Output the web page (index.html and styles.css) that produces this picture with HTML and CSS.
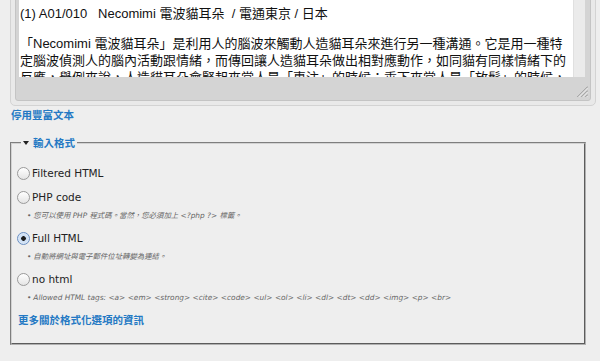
FILE: index.html
```html
<!DOCTYPE html>
<html lang="zh-Hant">
<head>
    <meta charset="UTF-8">
    <meta name="viewport" content="width=device-width, initial-scale=1.0">
    <title>Body</title>
    <link rel="stylesheet" href="styles.css">
</head>
<body>
    <div class="page">

        <!-- Rich text editor -->
        <div class="editor">
            <div class="editor-inner">
                <div class="editor-area">
                    <div class="editor-content">
                        <p>(1) A01/010&nbsp;&nbsp; Necomimi 電波貓耳朵 &nbsp;/ 電通東京 / 日本</p>
                        <p>「Necomimi 電波貓耳朵」是利用人的腦波來觸動人造貓耳朵來進行另一種溝通。它是用一種特定腦波偵測人的腦內活動跟情緒，而傳回讓人造貓耳朵做出相對應動作，如同貓有同樣情緒下的反應，舉例來說，人造貓耳朵會豎起來當人是「專注」的時候；垂下來當人是「放鬆」的時候，而當人是既專注又放鬆的時候，耳朵就會擺動。</p>
                    </div>
                    <div class="editor-scroll"></div>
                </div>
                <div class="editor-bottom">
                    <svg class="grip" width="11" height="11" viewBox="0 0 11 11">
                        <path d="M0.5 11 L11 0.5 M4.5 11 L11 4.5 M8.5 11 L11 8.5" stroke="#7c7c7c" stroke-width="1" fill="none"/>
                        <path d="M1.5 11 L11 1.5 M5.5 11 L11 5.5 M9.5 11 L11 9.5" stroke="#f2f2f2" stroke-width="1" fill="none"/>
                    </svg>
                </div>
            </div>
        </div>

        <a class="toggle-link" href="#">停用豐富文本</a>

        <!-- Input format -->
        <fieldset class="filter-wrapper">
            <legend><span class="arrow"></span>輸入格式</legend>

            <div class="option option--plain">
                <label class="option-label">
                    <input type="radio" name="format" value="filtered_html">
                    Filtered HTML
                </label>
            </div>

            <div class="option">
                <label class="option-label">
                    <input type="radio" name="format" value="php_code">
                    PHP code
                </label>
                <ul class="tips">
                    <li>您可以使用 PHP 程式碼。當然，您必須加上 &lt;?php ?&gt; 標籤。</li>
                </ul>
            </div>

            <div class="option">
                <label class="option-label">
                    <input type="radio" name="format" value="full_html" checked>
                    Full HTML
                </label>
                <ul class="tips">
                    <li>自動將網址與電子郵件位址轉變為連結。</li>
                </ul>
            </div>

            <div class="option">
                <label class="option-label">
                    <input type="radio" name="format" value="no_html">
                    no html
                </label>
                <ul class="tips">
                    <li>Allowed HTML tags: &lt;a&gt; &lt;em&gt; &lt;strong&gt; &lt;cite&gt; &lt;code&gt; &lt;ul&gt; &lt;ol&gt; &lt;li&gt; &lt;dl&gt; &lt;dt&gt; &lt;dd&gt; &lt;img&gt; &lt;p&gt; &lt;br&gt;</li>
                </ul>
            </div>

            <a class="more-link" href="#">更多關於格式化選項的資訊</a>
        </fieldset>

    </div>
</body>
</html>
```

FILE: styles.css
```css
body {
    margin: 0;
    background: #eeeeee;
    font-family: "DejaVu Sans", "Noto Sans CJK TC", sans-serif;
    font-size: 10.5px;
    color: #222;
}
.page {
    padding: 0 4px 0 10px;
}
a {
    color: #2479c4;
    text-decoration: none;
    font-weight: bold;
}

/* Editor box (scrolled so its top is out of view) */
.editor {
    margin-top: -12px;
    border: 1px solid #d3d3d3;
    border-radius: 5px;
    padding: 4px;
    background: #e9e9e9;
}
.editor-inner {
    border: 1px solid #c4c4c4;
    border-radius: 3px;
    background: #d4d4d4;
    padding: 3px 5px 0 3px;
}
.editor-area {
    display: flex;
    height: 80px;
}
.editor-content {
    flex: 1;
    background: #fff;
    overflow: hidden;
    padding: 8px 4px 0 1px;
    font-family: "Liberation Sans", "Noto Sans CJK TC", sans-serif;
    font-size: 13px;
    line-height: 17px;
    color: #111;
}
.editor-content p {
    margin: 0 0 13px;
}
.editor-scroll {
    width: 12px;
    box-sizing: border-box;
    background: #ebebeb;
    border-left: 1px solid #e0e0e0;
}
.editor-bottom {
    height: 23px;
    box-sizing: border-box;
    display: flex;
    justify-content: flex-end;
    align-items: flex-end;
    padding-bottom: 3px;
    margin-right: -3px;
}

.toggle-link {
    display: block;
    margin: 2px 0 0 1px;
    line-height: 14px;
    font-family: "Noto Sans CJK TC", sans-serif;
}

/* Input format fieldset */
.filter-wrapper {
    margin: 14px 10px 0 0;
    padding: 16px 5px 16px 5px;
    border: 2px groove #d2d2d2;
    border-right-color: #b0b0b0;
    border-bottom-color: #b0b0b0;
    min-width: 0;
}
.filter-wrapper legend {
    margin-left: 4px;
    padding: 0 2px;
    line-height: 14px;
    color: #2479c4;
    font-weight: bold;
    font-family: "Noto Sans CJK TC", sans-serif;
}
.arrow {
    display: inline-block;
    vertical-align: middle;
    margin: -2px 4px 0 0;
    border-left: 3px solid transparent;
    border-right: 3px solid transparent;
    border-top: 4px solid #222;
}

.option + .option {
    margin-top: 10px;
}
.option--plain {
    margin-bottom: 4px;
}
.option-label {
    display: flex;
    align-items: center;
    height: 14px;
}
.option-label input {
    appearance: none;
    -webkit-appearance: none;
    box-sizing: border-box;
    width: 13px;
    height: 13px;
    margin: 0 2px 0 0;
    border: 1px solid #9a9a9a;
    border-radius: 50%;
    background: linear-gradient(#ffffff, #e4e4e4);
}
.option-label input:checked {
    border-color: #6a8fc2;
    background: radial-gradient(circle, #1e1e1e 0 2px, #c9dcf2 2.6px, #eaf2fb 100%);
}
.tips {
    list-style: none;
    margin: 6px 0 0;
    padding: 0 0 0 10px;
    font-size: 7.4px;
    line-height: 11px;
    font-style: italic;
    color: #666;
}
.tips li::before {
    content: "•";
    margin-right: 2px;
}

.more-link {
    display: block;
    margin: 10px 0 0 1px;
    line-height: 14px;
    font-family: "Noto Sans CJK TC", sans-serif;
}
```
